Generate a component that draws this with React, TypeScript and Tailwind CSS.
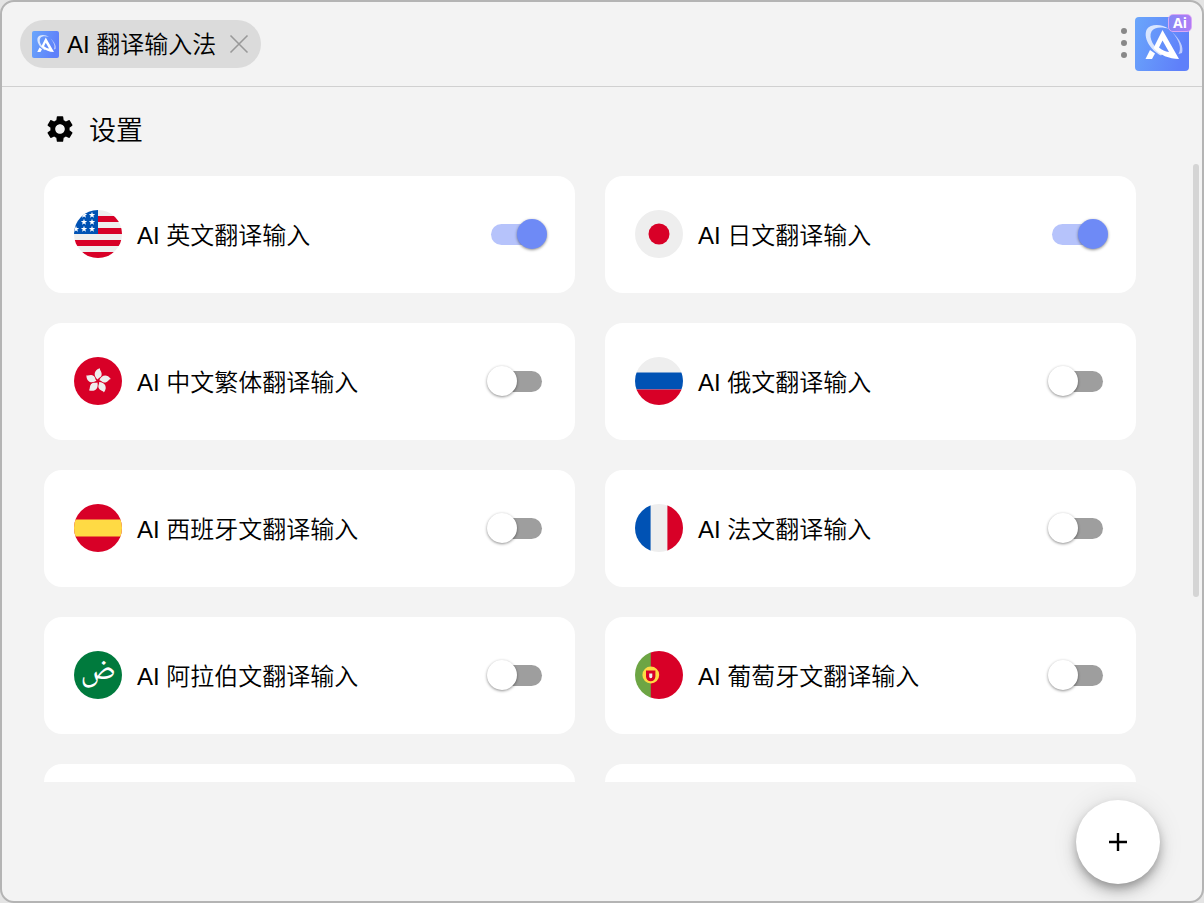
import { useState } from "react";
import type { ReactNode } from "react";
import clsx from "clsx";
import { MdSettings } from "react-icons/md";

type Language = {
  id: string;
  label: string;
  flag: ReactNode;
  enabled: boolean;
};

const STARS = [
  [18, 5],
  [10, 5],
  [10, 12],
  [18, 12],
  [2, 19],
  [10, 19],
  [18, 19],
];

const PETALS = [0, 72, 144, 216, 288];

const UsFlag = () => (
  <>
    <path fill="#eee" d="M0 0h48v48H0z" />
    <path fill="#d80027" d="M22 6h26v6H22zM22 18h26v6H22zM0 30h48v6H0zM0 42h48v6H0z" />
    <path fill="#0052b4" d="M0 0h24v24H0z" />
    {STARS.map(([x, y]) => (
      <path
        key={`${x}-${y}`}
        fill="#fff"
        transform={`translate(${x} ${y})`}
        d="M0-3.3.8-1H3.200L1.300.5 2 2.800 0 1.400-2 2.800-1.300.5-3.200-1H-.8z"
      />
    ))}
  </>
);

const JapanFlag = () => (
  <>
    <path fill="#eee" d="M0 0h48v48H0z" />
    <circle cx="24" cy="24" r="10.5" fill="#d80027" />
  </>
);

const HongKongFlag = () => (
  <>
    <path fill="#d80027" d="M0 0h48v48H0z" />
    {PETALS.map((angle) => (
      <path
        key={angle}
        fill="#eee"
        transform={`translate(24 24) rotate(${angle})`}
        d="M-.3-1.500C-4.800-5-4.400-11 2-12.800 1.400-10.800 4.600-9 3.500-5.600 2.700-3.500.8-3.600-.3-1.500z"
      />
    ))}
  </>
);

const RussiaFlag = () => (
  <>
    <path fill="#eee" d="M0 0h48v16H0z" />
    <path fill="#0052b4" d="M0 15.6h48v17H0z" />
    <path fill="#d80027" d="M0 32.4h48V48H0z" />
  </>
);

const SpainFlag = () => (
  <>
    <path fill="#d80027" d="M0 0h48v48H0z" />
    <path fill="#ffda44" d="M0 15.6h48v16.8H0z" />
  </>
);

const FranceFlag = () => (
  <>
    <path fill="#eee" d="M0 0h48v48H0z" />
    <path fill="#0052b4" d="M0 0h15.6v48H0z" />
    <path fill="#d80027" d="M32.4 0H48v48H32.4z" />
  </>
);

const ArabicFlag = () => (
  <>
    <circle cx="24" cy="24" r="24" fill="#007a3d" />
    <text
      x="24"
      y="28"
      textAnchor="middle"
      fill="#fff"
      className="font-['Noto_Naskh_Arabic','DejaVu_Sans',serif] text-[32px]"
    >
      ض
    </text>
  </>
);

const PortugalFlag = () => (
  <>
    <path fill="#6da544" d="M0 0h16v48H0z" />
    <path fill="#d80027" d="M15.8 0H48v48H15.8z" />
    <circle cx="15.8" cy="24" r="8.4" fill="#ffda44" />
    <path fill="#d80027" d="M11 19.4h9.4v6.2a4.7 4.7 0 0 1-9.4 0z" />
    <path fill="#eee" d="M14.2 22.4h3.1v3.2a1.55 1.55 0 0 1-3.1 0z" />
  </>
);

const LANGUAGES: Language[] = [
  { id: "en", label: "AI 英文翻译输入", flag: <UsFlag />, enabled: true },
  { id: "ja", label: "AI 日文翻译输入", flag: <JapanFlag />, enabled: true },
  { id: "zh-hk", label: "AI 中文繁体翻译输入", flag: <HongKongFlag />, enabled: false },
  { id: "ru", label: "AI 俄文翻译输入", flag: <RussiaFlag />, enabled: false },
  { id: "es", label: "AI 西班牙文翻译输入", flag: <SpainFlag />, enabled: false },
  { id: "fr", label: "AI 法文翻译输入", flag: <FranceFlag />, enabled: false },
  { id: "ar", label: "AI 阿拉伯文翻译输入", flag: <ArabicFlag />, enabled: false },
  { id: "pt", label: "AI 葡萄牙文翻译输入", flag: <PortugalFlag />, enabled: false },
];

// App logo, an "A" with an orbit around it
const Logo = ({ id, className }: { id: string; className: string }) => (
  <svg viewBox="0 0 54 54" className={className} aria-hidden="true">
    <defs>
      <linearGradient id={id} x1="0" y1="0" x2="1" y2="0.3">
        <stop offset="0" stopColor="#6aa6fb" />
        <stop offset="1" stopColor="#5f80fa" />
      </linearGradient>
    </defs>
    <rect width="54" height="54" rx="4" fill={`url(#${id})`} />
    <path
      fill="#fff"
      fillOpacity=".75"
      d="M34 12C27 6.500 15.500 6.500 12 12 7.500 20 15 33 26 38.500L28 36.500C19 31 13 21 16.500 14.500 19 10 27 9.500 34 12z"
    />
    <path fill="#fff" fillOpacity=".6" d="M37 15C45 22 49 30 47 36L43.500 37C47 31 44 23 37 15z" />
    <path
      fill="#fff"
      fillRule="evenodd"
      d="M27.500 13 44 42C34 42 25 38 18.500 31zM27.500 23.500 24 30.500C27 33 30 34.500 34 35z"
    />
    <path fill="#fff" d="M15 33 20 36.500 17 42H10.500z" />
  </svg>
);

const LanguageCard = ({ id, label, flag, enabled }: Language) => {
  const [checked, setChecked] = useState(enabled);

  return (
    <li className="flex h-[117px] items-center rounded-[18px] bg-white pr-[33px] pl-[30px]">
      <svg
        viewBox="0 0 48 48"
        className={clsx("mb-px size-12 shrink-0", id === "ar" ? "overflow-visible" : "overflow-hidden rounded-full")}
        aria-hidden="true"
      >
        {flag}
      </svg>
      <label htmlFor={id} className="ml-[15px] flex-1 pt-0.5 text-[24px] leading-9">
        {label}
      </label>
      <input
        id={id}
        type="checkbox"
        role="switch"
        checked={checked}
        onChange={() => setChecked(!checked)}
        className="relative h-[21px] w-[51px] shrink-0 cursor-pointer appearance-none rounded-full bg-[#9e9e9e] before:absolute before:-top-[5px] before:-left-1 before:size-[30px] before:rounded-full before:bg-white before:shadow-[0_1px_3px_rgba(0,0,0,0.45)] before:transition-all checked:bg-[#b6c3fb] checked:before:left-[26px] checked:before:bg-[#6e8af6]"
      />
    </li>
  );
};

export default function App() {
  return (
    <div className="h-screen bg-[#e4e4e4] font-['Liberation_Sans','Noto_Sans_CJK_SC_DemiLight','Noto_Sans_CJK_SC',sans-serif] font-normal text-black">
      <div className="flex h-full flex-col overflow-hidden rounded-[14px] border-2 border-[#b4b4b4] bg-[#f3f3f3]">
        {/* Header */}
        <header className="flex h-[85px] shrink-0 items-center justify-between border-b border-[#d0d0d0] pr-[13px] pl-[18px]">
          <div className="flex h-12 items-center rounded-full bg-[#dbdbdb] px-3">
            <Logo id="logo-small" className="size-[27px]" />
            <span className="ml-2 pt-0.5 text-[24px] leading-9">AI 翻译输入法</span>
            <button type="button" aria-label="关闭" className="ml-[13px] cursor-pointer">
              <svg viewBox="0 0 20 20" className="size-5" aria-hidden="true">
                <path d="M1.500 1.500l17 17M18.500 1.500l-17 17" stroke="#999" strokeWidth="1.600" />
              </svg>
            </button>
          </div>

          <div className="flex items-center gap-2">
            <button type="button" aria-label="菜单" className="flex cursor-pointer flex-col gap-1.5 pb-0.5">
              <span className="size-1.5 rounded-full bg-[#888]" />
              <span className="size-1.5 rounded-full bg-[#888]" />
              <span className="size-1.5 rounded-full bg-[#888]" />
            </button>
            <div className="relative">
              <Logo id="logo-large" className="size-[54px]" />
              <span className="absolute -top-[3px] -right-[3px] flex h-[18px] w-6 items-center justify-center rounded-[5px] border border-[#d9a8f5] bg-linear-to-r from-[#8488f6] to-[#b07cf5] font-['Open_Sans',sans-serif] text-[14px] leading-4 font-bold text-white">
                Ai
              </span>
            </div>
          </div>
        </header>

        {/* Title */}
        <div className="flex h-[77px] shrink-0 items-center gap-[13px] pt-[7px] pl-[42px]">
          <MdSettings className="size-8" />
          <h1 className="pt-1 text-[27px] leading-10">设置</h1>
        </div>

        {/* Languages */}
        <main className="relative min-h-0 flex-1 overflow-hidden">
          <ul className="grid grid-cols-2 gap-[30px] pt-3 pr-[66px] pl-[42px]">
            {LANGUAGES.map((language) => (
              <LanguageCard key={language.id} {...language} />
            ))}
            <li className="h-[117px] rounded-[18px] bg-white" />
            <li className="h-[117px] rounded-[18px] bg-white" />
          </ul>
          <div className="absolute top-0 right-[3px] h-[70%] w-1.5 rounded-full bg-[#d5d5d5]" />
        </main>

        {/* Add button */}
        <footer className="flex shrink-0 justify-end pt-[18px] pr-[42px] pb-[17px]">
          <button
            type="button"
            aria-label="添加"
            className="flex size-[84px] cursor-pointer items-center justify-center rounded-full bg-white shadow-[0_5px_8px_-1px_rgba(0,0,0,0.25),0_9px_15px_rgba(0,0,0,0.14),0_2px_27px_rgba(0,0,0,0.1)]"
          >
            <svg viewBox="0 0 18 18" className="size-[18px]" aria-hidden="true">
              <path d="M9 0v18M0 9h18" stroke="#000" strokeWidth="2.400" />
            </svg>
          </button>
        </footer>
      </div>
    </div>
  );
}
